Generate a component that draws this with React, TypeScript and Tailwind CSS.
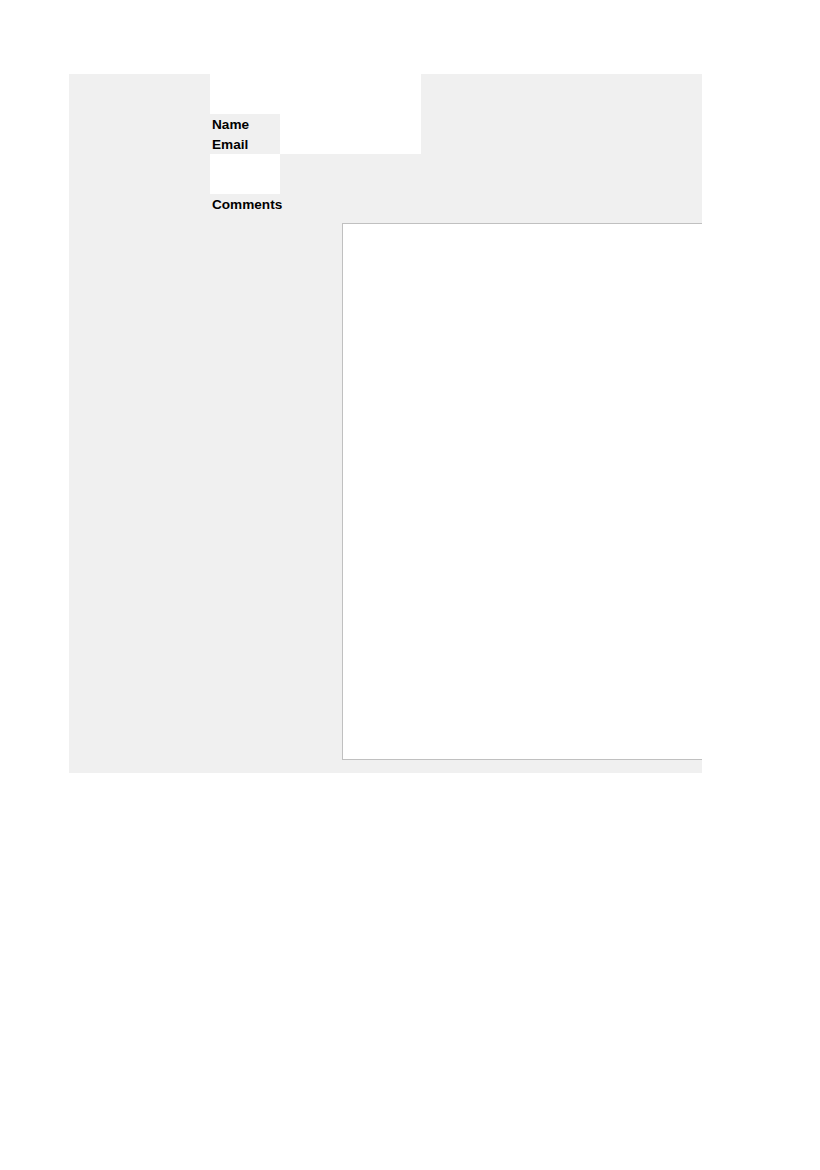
import React from "react";

const App = () => {
  return (
    <div className="min-h-[1170px] w-[820px] bg-white pt-[74px] pl-[69px] font-['Liberation_Sans',Arial,sans-serif] text-black">
      <div className="w-[633px] h-[699px] bg-[#f0f0f0] overflow-hidden pl-[141px]">
        {/* TOP */}
        <div className="w-[211px] h-[40px] bg-white"></div>
        <div className="flex">
          <div className="w-[70px] h-[40px] flex flex-col pl-[2px] pt-px text-[13.6px] font-bold leading-[20px]">
            <label>Name</label>
            <label>Email</label>
          </div>
          <div className="w-[141px] h-[40px] bg-white"></div>
        </div>
        <div className="w-[70px] h-[40px] bg-white"></div>
        {/* COMMENTS */}
        <div className="h-[20px] pl-[2px] pt-px text-[13.6px] font-bold leading-[20px] whitespace-nowrap">
          <label>Comments</label>
        </div>
        <textarea className="block mt-[9px] ml-[132px] w-[400px] h-[537px] bg-white border border-[#c0c0c0] resize-none outline-none"></textarea>
      </div>
    </div>
  );
};

export default App;
